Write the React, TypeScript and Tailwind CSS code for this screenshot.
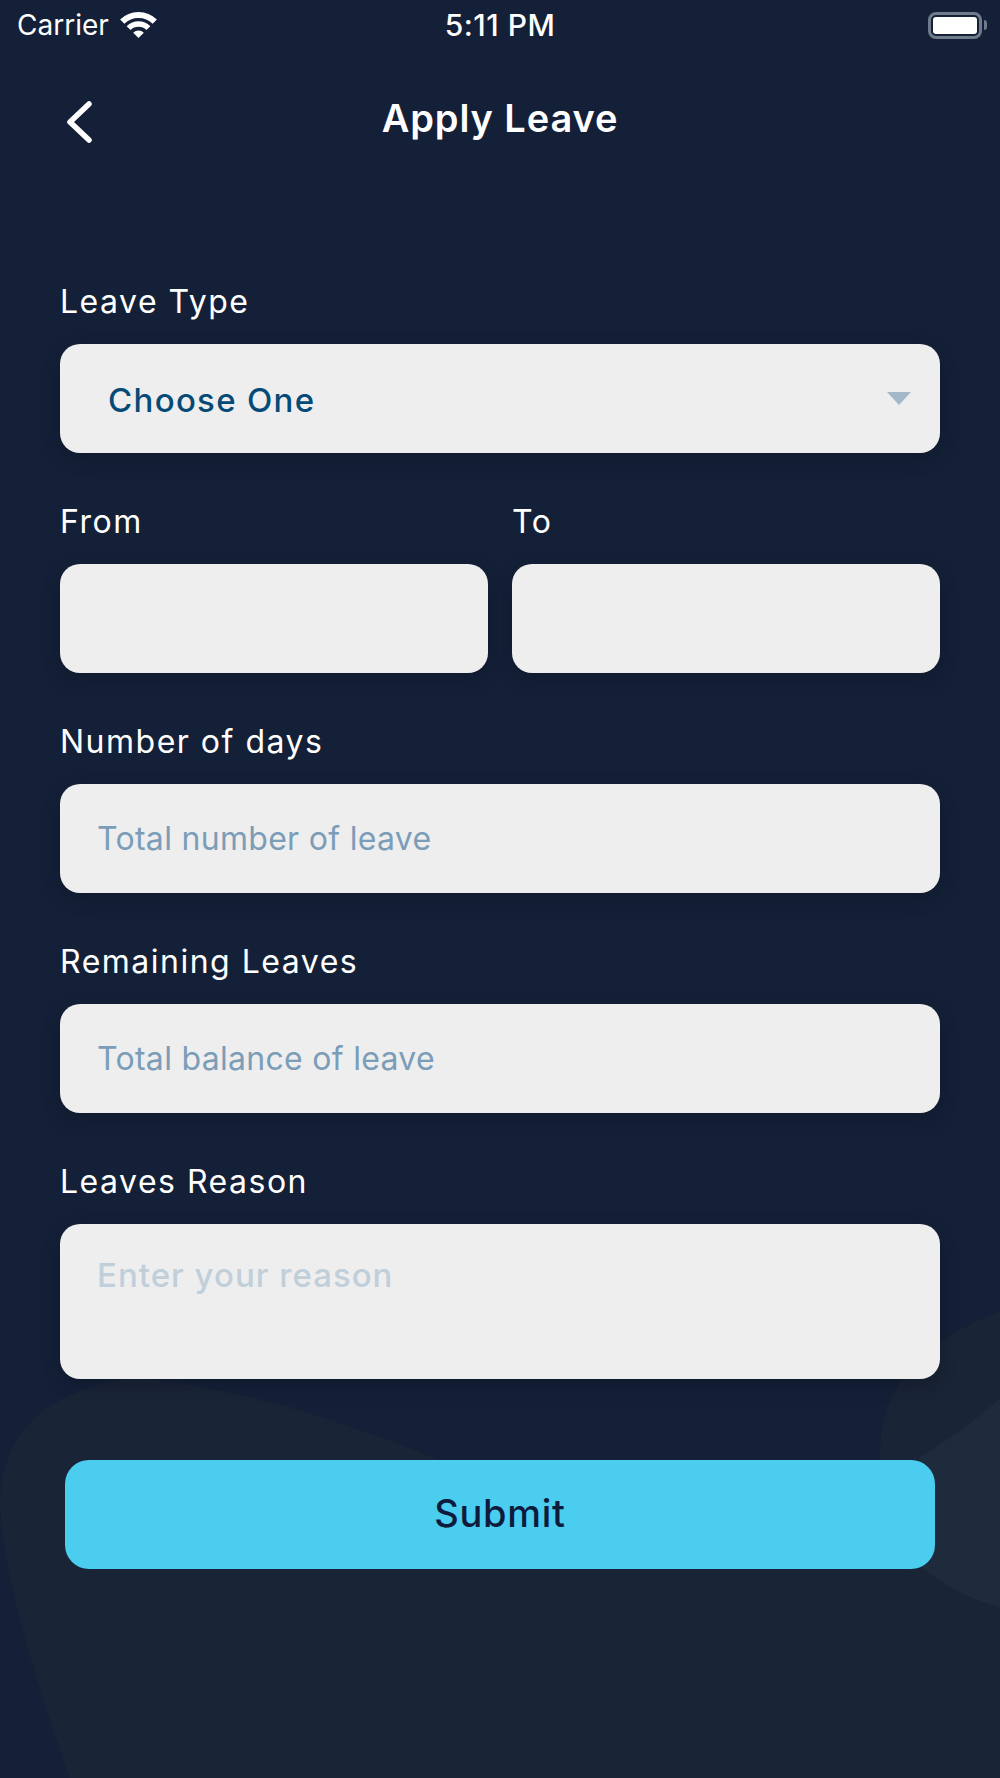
function Wifi() {
  return (
    <svg width="37" height="26" viewBox="0 0 37 26" fill="none" className="absolute left-[120px] top-[12px]">
      <path d="M2.24 9.74A23 23 0 0 1 34.76 9.74" stroke="white" strokeWidth="6" />
      <path d="M8.6 16.1A14 14 0 0 1 28.4 16.1" stroke="white" strokeWidth="5.5" />
      <path d="M18.5 26L13.2 20.7A7.5 7.5 0 0 1 23.8 20.7Z" fill="white" />
    </svg>
  );
}

function Battery() {
  return (
    <div className="flex items-center">
      <div className="w-[54px] h-[27px] rounded-[8px] border-[3px] border-[#6f7a8a] p-[2px]">
        <div className="w-full h-full rounded-[3px] bg-white" />
      </div>
      <div className="w-[3px] h-[10px] ml-[2px] rounded-r-full bg-[#6f7a8a]" />
    </div>
  );
}

function Label({ children }: { children: string }) {
  return <p className="h-[46px] pt-[2px] mb-[20px] flex items-center text-[32px] text-white tracking-[1.5px]">{children}</p>;
}

function Box({ children }: { children?: React.ReactNode }) {
  return (
    <div className="h-[109px] rounded-[20px] bg-[#eeeeee] flex items-center pl-[37px] pr-[27px] shadow-[0_6px_16px_rgba(10,18,32,0.35)]">
      {children}
    </div>
  );
}

export default function App() {
  return (
    <div className="relative w-[1000px] h-[1778px] overflow-hidden bg-[#142037] font-['Inter',sans-serif]">
      {/* Background blobs */}
      <svg className="absolute inset-0" width="1000" height="1778" fill="none">
        <path d="M0 1503 C2 1450 25 1395 130 1378 C240 1385 350 1425 440 1460 L880 1460 C880 1410 895 1350 1000 1312 L1000 1778 L70 1778 C35 1680 2 1570 0 1503 Z" fill="#192436" />
        <path d="M1000 1398 C970 1425 940 1445 920 1457 L900 1500 L923 1568 C950 1590 975 1600 1000 1607 Z" fill="#1e2b3d" />
      </svg>

      <div className="relative">
        {/* Status bar */}
        <div className="h-[50px] flex items-center justify-between pl-[17px] pr-[13px] text-white">
          <span className="text-[28px]">Carrier</span>
          <Wifi />
          <span className="absolute left-0 right-0 text-center text-[30px] font-medium tracking-[0.5px]">5:11 PM</span>
          <Battery />
        </div>

        {/* Header */}
        <div className="relative h-[138px] flex items-center justify-center">
          <svg width="30" height="46" viewBox="0 0 30 46" fill="none" className="absolute left-[64px] top-[49px]">
            <path d="M25 5L6 23L25 41" stroke="white" strokeWidth="5.5" strokeLinecap="round" strokeLinejoin="round" />
          </svg>
          <h1 className="mb-[2px] text-[38px] font-semibold text-white tracking-[0.9px]">Apply Leave</h1>
        </div>

        {/* Form */}
        <div className="px-[60px] pt-[90px]">
          <Label>Leave Type</Label>
          <Box>
            <span className="flex-1 pl-[11px] pt-[5px] text-[33px] font-medium text-[#064a78] tracking-[1.3px]">Choose One</span>
            <svg width="24" height="13" viewBox="0 0 24 13" className="mr-[2px]"><path d="M0 0H24L12 13Z" fill="#a3b8c8" /></svg>
          </Box>

          <div className="mt-[45px] grid grid-cols-2 gap-[24px]">
            <div><Label>From</Label><Box /></div>
            <div><Label>To</Label><Box /></div>
          </div>

          <div className="mt-[45px]">
            <Label>Number of days</Label>
            <Box><span className="text-[32px] text-[#7b9db8] tracking-[0.3px]">Total number of leave</span></Box>
          </div>

          <div className="mt-[45px]">
            <Label>Remaining Leaves</Label>
            <Box><span className="text-[32px] text-[#7b9db8] tracking-[0.3px]">Total balance of leave</span></Box>
          </div>

          <div className="mt-[45px]">
            <Label>Leaves Reason</Label>
            <div className="h-[155px] rounded-[20px] bg-[#eeeeee] pl-[37px] pt-[29px] text-[33px] leading-[44px] font-medium text-[#c0cfda] tracking-[1px] shadow-[0_6px_16px_rgba(10,18,32,0.35)]">
              Enter your reason
            </div>
          </div>

          <div className="mt-[81px] mx-[5px] h-[109px] pb-[2px] rounded-[24px] bg-[#4bcdf0] flex items-center justify-center text-[38px] font-medium text-[#0e1b3d] tracking-[0.7px]">
            Submit
          </div>
        </div>
      </div>
    </div>
  );
}
